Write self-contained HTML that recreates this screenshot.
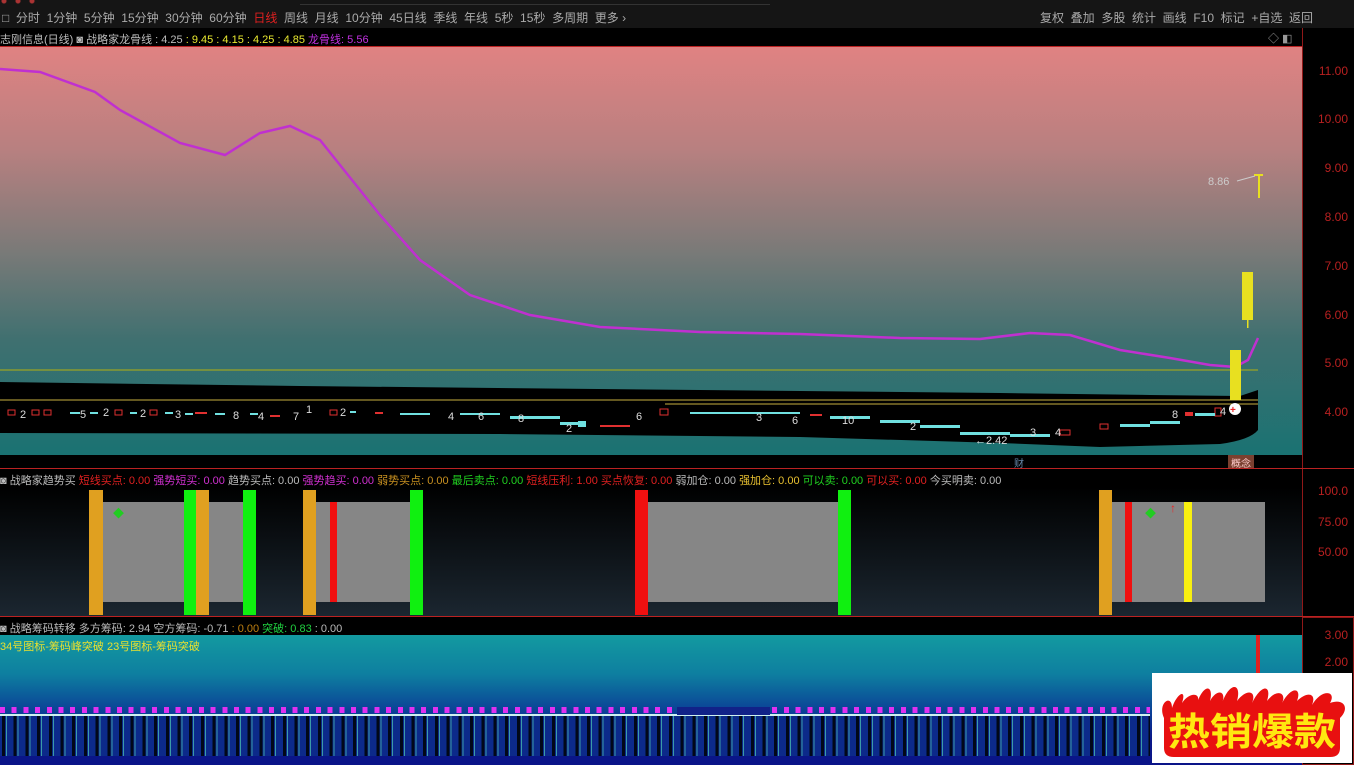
<!DOCTYPE html>
<html><head><meta charset="utf-8"><style>
*{margin:0;padding:0;box-sizing:border-box}
body{width:1354px;height:765px;overflow:hidden;background:#000;font-family:"Liberation Sans","Noto Sans CJK SC",sans-serif;position:relative;color:#ccc}
.a{position:absolute}
.tb{left:0;top:0;width:1354px;height:28px;background:#151515}
.tb span{position:absolute;top:9px;font-size:12px;color:#aaa;white-space:nowrap}
.ttl{font-size:11px;white-space:nowrap;color:#bbb}
.ax{position:absolute;font-size:12px;color:#b82020;right:6px}
</style></head><body>
<div class="a tb">
<div class="a" style="left:0;top:0;width:40px;height:5px;background:radial-gradient(circle at 4px 1px,#a33 2px,transparent 3px),radial-gradient(circle at 18px 1px,#a33 2px,transparent 3px),radial-gradient(circle at 32px 1px,#a33 2px,transparent 3px)"></div>
<div class="a" style="left:300px;top:4px;width:470px;height:1px;background:#333"></div>
<span style="left:2px">□ &nbsp;分时 &nbsp;1分钟 &nbsp;5分钟 &nbsp;15分钟 &nbsp;30分钟 &nbsp;60分钟 &nbsp;<b style="color:#e02020;font-weight:normal">日线</b> &nbsp;周线 &nbsp;月线 &nbsp;10分钟 &nbsp;45日线 &nbsp;季线 &nbsp;年线 &nbsp;5秒 &nbsp;15秒 &nbsp;多周期 &nbsp;更多 ›</span>
<span style="left:1040px">复权 &nbsp;叠加 &nbsp;多股 &nbsp;统计 &nbsp;画线 &nbsp;F10 &nbsp;标记 &nbsp;+自选 &nbsp;返回</span>
</div>
<div class="a ttl" style="left:0;top:31px">志刚信息(日线) ◙ 战略家龙骨线 : 4.25 <span style="color:#e8e830">: 9.45 : 4.15 : 4.25 : 4.85</span> <span style="color:#c030e0">龙骨线: 5.56</span></div>
<div class="a" style="left:1268px;top:30px;font-size:11px;color:#999">◇ ◧</div>
<div class="a" style="left:0;top:47px;width:1302px;height:408px;background:linear-gradient(#e08282 0%,#b88080 25%,#7a7a78 50%,#3f7070 72%,#1a7272 100%)"></div>
<div class="a" style="left:0;top:46px;width:1354px;height:1px;background:#b22"></div>
<div class="a" style="left:1302px;top:28px;width:52px;height:737px;background:#000;border-left:1px solid #901818"></div>
<div class="ax" style="top:64px">11.00</div><div class="ax" style="top:112px">10.00</div><div class="ax" style="top:161px">9.00</div><div class="ax" style="top:210px">8.00</div><div class="ax" style="top:259px">7.00</div><div class="ax" style="top:308px">6.00</div><div class="ax" style="top:356px">5.00</div><div class="ax" style="top:405px">4.00</div>
<svg class="a" style="left:0;top:0" width="1302" height="765">
<path d="M0,382 L300,386 L700,390 L1000,393 L1150,395 L1240,396 L1258,390 L1258,430 Q1250,440 1220,444 L1100,447 L1000,443 L800,437 L500,434 L0,433 Z" fill="#000"/>
<line x1="0" y1="370" x2="1258" y2="370" stroke="#8a9a30" stroke-width="1.5"/>
<line x1="0" y1="400" x2="1258" y2="400" stroke="#c8b040" stroke-width="1"/>
<line x1="665" y1="404" x2="1258" y2="404" stroke="#c8b040" stroke-width="1"/>
<path d="M0,69 L40,72 L95,92 L120,110 L180,143 L225,155 L260,133 L290,126 L320,140 L340,165 L380,215 L420,260 L470,295 L530,315 L600,327 L700,332 L800,334 L900,338 L980,339 L1030,333 L1070,335 L1120,350 L1170,358 L1210,365 L1235,367 L1248,360 L1258,338" fill="none" stroke="#c030d0" stroke-width="2.5"/>
<g fill="#e8e020"><rect x="1230" y="350" width="11" height="50"/><rect x="1242" y="272" width="11" height="48"/><rect x="1247" y="320" width="1.5" height="8"/><rect x="1258" y="174" width="2" height="24"/><rect x="1254" y="174" width="9" height="2"/></g>
<text x="1208" y="185" font-size="11" fill="#ccc">8.86</text><line x1="1237" y1="181" x2="1255" y2="176" stroke="#ccc"/>
<circle cx="1235" cy="409" r="6" fill="#fff"/><text x="1230" y="413" font-size="10" fill="#e22" font-weight="bold">+</text>
<g fill="#e03030"><rect x="8" y="410" width="7" height="5" fill="none" stroke="#e03030"/><rect x="32" y="410" width="7" height="5" fill="none" stroke="#e03030"/><rect x="44" y="410" width="7" height="5" fill="none" stroke="#e03030"/><rect x="115" y="410" width="7" height="5" fill="none" stroke="#e03030"/><rect x="150" y="410" width="7" height="5" fill="none" stroke="#e03030"/><rect x="195" y="412" width="12" height="2"/><rect x="270" y="415" width="10" height="2"/><rect x="330" y="410" width="7" height="5" fill="none" stroke="#e03030"/><rect x="375" y="412" width="8" height="2"/><rect x="660" y="409" width="8" height="6" fill="none" stroke="#e03030"/><rect x="810" y="414" width="12" height="2"/><rect x="1060" y="430" width="10" height="5" fill="none" stroke="#e03030"/><rect x="1100" y="424" width="8" height="5" fill="none" stroke="#e03030"/><rect x="1185" y="412" width="8" height="4"/><rect x="1215" y="408" width="6" height="8" fill="none" stroke="#e03030"/><rect x="600" y="425" width="30" height="2"/></g>
<g fill="#70e0e0"><rect x="70" y="412" width="10" height="2"/><rect x="90" y="412" width="8" height="2"/><rect x="130" y="412" width="7" height="2"/><rect x="165" y="412" width="8" height="2"/><rect x="185" y="413" width="8" height="2"/><rect x="215" y="413" width="10" height="2"/><rect x="250" y="413" width="8" height="2"/><rect x="350" y="411" width="6" height="2"/><rect x="400" y="413" width="30" height="2"/><rect x="460" y="413" width="40" height="2"/><rect x="510" y="416" width="50" height="3"/><rect x="560" y="422" width="20" height="3"/><rect x="578" y="421" width="8" height="6"/><rect x="690" y="412" width="110" height="2"/><rect x="830" y="416" width="40" height="3"/><rect x="880" y="420" width="40" height="3"/><rect x="920" y="425" width="40" height="3"/><rect x="960" y="432" width="50" height="3"/><rect x="1010" y="434" width="40" height="3"/><rect x="1120" y="424" width="30" height="3"/><rect x="1150" y="421" width="30" height="3"/><rect x="1195" y="413" width="20" height="3"/></g>
<g font-size="11" fill="#ddd"><text x="20" y="418">2</text><text x="80" y="418">5</text><text x="103" y="416">2</text><text x="140" y="417">2</text><text x="175" y="418">3</text><text x="233" y="419">8</text><text x="258" y="420">4</text><text x="293" y="420">7</text><text x="306" y="413">1</text><text x="340" y="416">2</text><text x="448" y="420">4</text><text x="478" y="420">6</text><text x="518" y="422">8</text><text x="566" y="432">2</text><text x="636" y="420">6</text><text x="756" y="421">3</text><text x="792" y="424">6</text><text x="842" y="424">10</text><text x="910" y="430">2</text><text x="975" y="444">←2.42</text><text x="1030" y="436">3</text><text x="1055" y="436">4</text><text x="1172" y="418">8</text><text x="1220" y="415">4</text></g>
</svg>
<div class="a" style="left:0;top:455px;width:1302px;height:13px;background:#000"></div>
<div class="a" style="left:1014px;top:455px;font-size:10px;color:#68a">财</div>
<div class="a" style="left:1228px;top:455px;width:26px;height:13px;background:#7a4030;font-size:10px;color:#fcc;text-align:center">概念</div>
<div class="a" style="left:0;top:468px;width:1354px;height:1px;background:#b22"></div>
<div class="a ttl" style="left:0;top:472px">◙ 战略家趋势买 <span style="color:#e02020">短线买点: 0.00</span> <span style="color:#d030d0">强势短买: 0.00</span> 趋势买点: 0.00 <span style="color:#d030d0">强势趋买: 0.00</span> <span style="color:#c89020">弱势买点: 0.00</span> <span style="color:#20d020">最后卖点: 0.00</span> <span style="color:#e02020">短线压利: 1.00 买点恢复: 0.00</span> 弱加仓: 0.00 <span style="color:#e8c030">强加仓: 0.00</span> <span style="color:#20d020">可以卖: 0.00</span> <span style="color:#e02020">可以买: 0.00</span> 今买明卖: 0.00</div>
<div class="a" style="left:0;top:487px;width:1302px;height:129px;background:linear-gradient(#000,#1b2630)"></div>
<div class="a" style="left:103px;top:502px;width:140px;height:100px;background:#868686"></div>
<div class="a" style="left:316px;top:502px;width:94px;height:100px;background:#868686"></div>
<div class="a" style="left:648px;top:502px;width:190px;height:100px;background:#868686"></div>
<div class="a" style="left:1112px;top:502px;width:153px;height:100px;background:#868686"></div>
<div class="a" style="left:89px;top:490px;width:14px;height:125px;background:#e0a020"></div>
<div class="a" style="left:184px;top:490px;width:12px;height:125px;background:#10f010"></div>
<div class="a" style="left:196px;top:490px;width:13px;height:125px;background:#e0a020"></div>
<div class="a" style="left:243px;top:490px;width:13px;height:125px;background:#10f010"></div>
<div class="a" style="left:303px;top:490px;width:13px;height:125px;background:#e0a020"></div>
<div class="a" style="left:330px;top:502px;width:7px;height:100px;background:#f01010"></div>
<div class="a" style="left:410px;top:490px;width:13px;height:125px;background:#10f010"></div>
<div class="a" style="left:635px;top:490px;width:13px;height:125px;background:#f01010"></div>
<div class="a" style="left:838px;top:490px;width:13px;height:125px;background:#10f010"></div>
<div class="a" style="left:1099px;top:490px;width:13px;height:125px;background:#e0a020"></div>
<div class="a" style="left:1125px;top:502px;width:7px;height:100px;background:#f01010"></div>
<div class="a" style="left:1184px;top:502px;width:8px;height:100px;background:#f8f010"></div>
<div class="a" style="left:113px;top:505px;font-size:11px;color:#2c2">◆</div>
<div class="a" style="left:1145px;top:505px;font-size:11px;color:#2c2">◆</div>
<div class="a" style="left:1170px;top:501px;font-size:12px;color:#e22">↑</div>
<div class="ax" style="top:484px">100.0</div><div class="ax" style="top:515px">75.00</div><div class="ax" style="top:545px">50.00</div>
<div class="a" style="left:0;top:616px;width:1354px;height:1px;background:#b22"></div>
<div class="a ttl" style="left:0;top:620px">◙ 战略筹码转移 多方筹码: 2.94 空方筹码: -0.71 <span style="color:#c08010">: 0.00</span> <span style="color:#20d040">突破: 0.83</span> : 0.00</div>
<div class="a" style="left:0;top:635px;width:1302px;height:130px;background:linear-gradient(#139aa0 0%,#0e7fa0 30%,#0a3a95 62%,#0a1888 80%,#0a1488 100%)"></div>
<div class="a" style="left:1302px;top:617px;width:52px;height:148px;border:1px solid #901818;background:#000"></div>
<div class="ax" style="top:628px">3.00</div><div class="ax" style="top:655px">2.00</div>
<div class="a ttl" style="left:0;top:638px;color:#e8e030">34号图标-筹码峰突破 23号图标-筹码突破</div>
<div class="a" style="left:1256px;top:635px;width:4px;height:40px;background:#e02020"></div>
<div class="a" style="left:0;top:707px;width:1150px;height:6px;background:repeating-linear-gradient(90deg,#e030f0 0 5px,transparent 5px 11.7px)"></div>
<div class="a" style="left:0;top:714px;width:1150px;height:2px;background:#d0f0f0"></div>
<div class="a" style="left:0;top:716px;width:1150px;height:40px;background:repeating-linear-gradient(90deg,#0c2a8a 0 2px,#010818 2px 5px,#0c2a8a 5px 6px,#3a9aa8 6px 7px,#0c2a8a 7px 11.7px)"></div>
<div class="a" style="left:677px;top:707px;width:93px;height:8px;background:#128"></div>
<div class="a" style="left:1152px;top:673px;width:200px;height:90px;background:#fff"></div>
<svg class="a" style="left:1152px;top:673px" width="200" height="90">
<path d="M12,45 C5,30 20,20 20,35 C25,20 35,15 30,30 C38,18 50,20 45,30 C52,10 62,12 58,28 C65,15 75,18 70,30 C78,8 90,10 85,28 C95,15 105,18 100,30 C110,10 120,12 115,28 C125,15 135,20 130,30 C140,12 150,15 145,28 C155,18 165,20 160,32 C170,15 185,18 178,30 C192,25 198,35 188,45 L188,75 Q188,84 178,84 L22,84 Q12,84 12,75 Z" fill="#e81010"/>
<text x="100" y="72" text-anchor="middle" font-size="38" font-weight="bold" fill="#ffe810" font-family="'Noto Sans CJK SC',sans-serif" textLength="168" lengthAdjust="spacingAndGlyphs">热销爆款</text>
</svg>
</body></html>
